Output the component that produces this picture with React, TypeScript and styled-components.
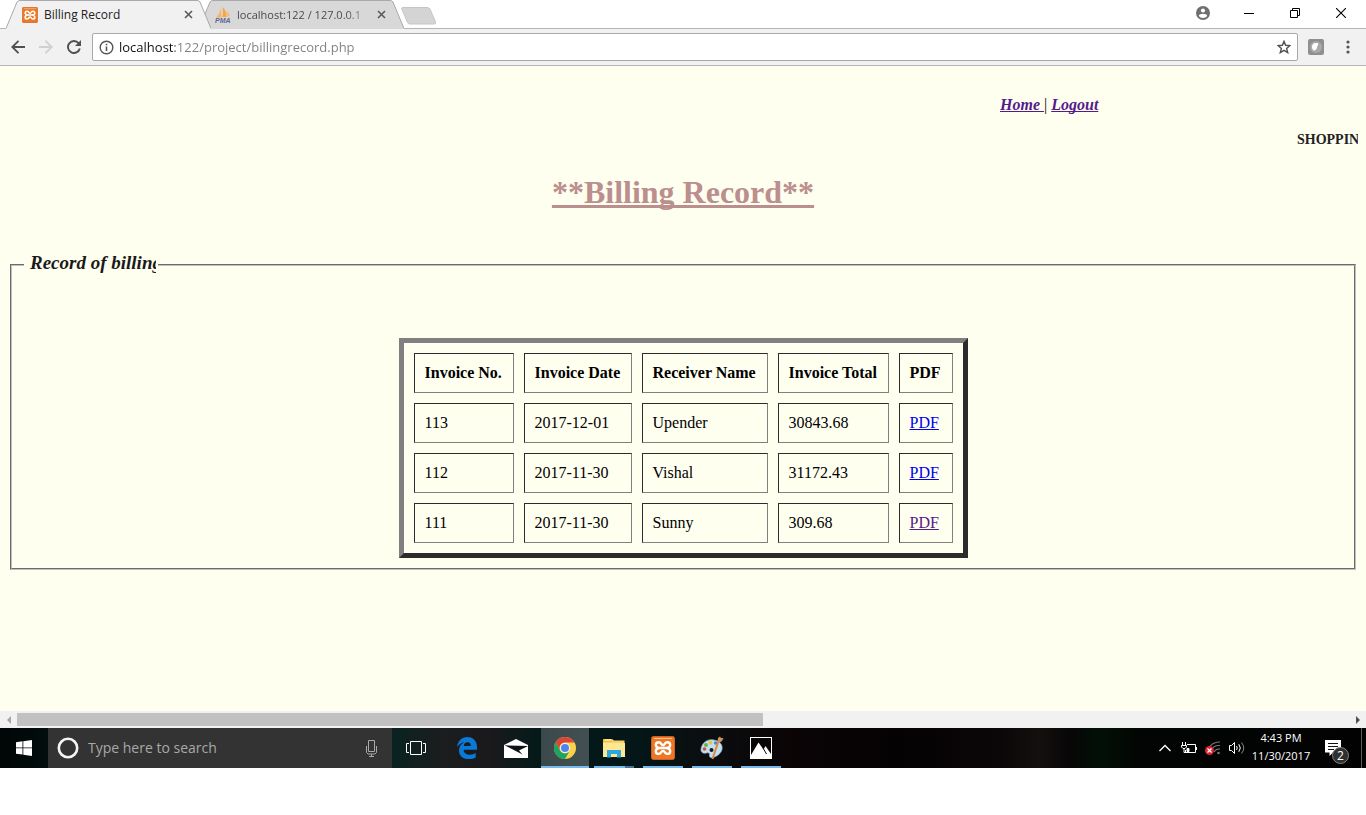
import React from "react";
import styled, { createGlobalStyle } from "styled-components";

const UI_FONT = '"Open Sans", "Noto Sans", sans-serif';
const PAGE_FONT = '"Liberation Serif", "Times New Roman", serif';

const GlobalStyle = createGlobalStyle`
  *, *::before, *::after { box-sizing: border-box; }
  body { margin: 0; background: #ffffff; font-family: ${UI_FONT}; }
  button { border: 0; padding: 0; background: none; font: inherit; color: inherit; }
  svg { display: block; flex: none; }
`;

/* ---------- Browser window ---------- */

const TabStrip = styled.header`
  display: flex;
  height: 29px;
  padding-left: 6px;
  background: #ffffff;
  border-bottom: 1px solid #b6b4b6;
`;

const Tabs = styled.div`
  display: flex;
  flex: 1;
`;

const Tab = styled.div<{ $active?: boolean }>`
  position: relative;
  z-index: ${(p) => (p.$active ? 2 : 1)};
  display: flex;
  align-items: center;
  width: 205px;
  height: 29px;
  padding: 0 16px;
  & + & { margin-left: -12px; }
`;

const TabShape = styled.svg`
  position: absolute;
  inset: 0;
`;

const TabLabel = styled.button<{ $fade?: boolean }>`
  position: relative;
  display: flex;
  align-items: center;
  flex: 1;
  gap: 6px;
  min-width: 0;
  font-size: ${(p) => (p.$fade ? "11px" : "12px")};
  line-height: 16px;
  color: ${(p) => (p.$fade ? "#4a4a4a" : "#222222")};
  white-space: nowrap;
  span {
    flex: 1;
    text-align: left;
    mask-image: ${(p) => (p.$fade ? "linear-gradient(90deg, #000 84%, rgba(0, 0, 0, 0.3))" : "none")};
  }
`;

const TabClose = styled.button`
  position: relative;
  display: grid;
  place-items: center;
  width: 14px;
  height: 16px;
  margin-left: 8px;
`;

const NewTab = styled.button`
  width: 36px;
  height: 20px;
  margin: 6px 0 0 -3px;
`;

const WindowControls = styled.div`
  display: flex;
  padding-right: 2px;
`;

const WindowButton = styled.button`
  display: grid;
  place-items: center;
  width: 46px;
  height: 26px;
`;

const Toolbar = styled.div`
  display: flex;
  align-items: center;
  height: 37px;
  padding: 0 4px;
  background: #f2f1f2;
  border-bottom: 1px solid #b6b4b6;
`;

const ToolButton = styled.button<{ $width?: number }>`
  display: grid;
  place-items: center;
  width: ${(p) => p.$width ?? 28}px;
  height: 28px;
`;

const AddressBar = styled.div`
  display: flex;
  align-items: center;
  flex: 1;
  height: 28px;
  margin-left: 4px;
  padding-left: 6px;
  background: #ffffff;
  border: 1px solid #a9a8a9;
  border-radius: 2px;
`;

const AddressInput = styled.input`
  flex: 1;
  min-width: 0;
  height: 22px;
  margin-left: 5px;
  padding: 0;
  border: 0;
  outline: 0;
  font-family: ${UI_FONT};
  font-size: 13px;
  color: transparent;
  background: linear-gradient(90deg, #111111 56px, #808080 56px);
  background-clip: text;
`;

/* ---------- Web page ---------- */

const Page = styled.main`
  padding: 30px 8px 141px;
  background: #fffff0;
  font-family: ${PAGE_FONT};
  font-size: 16px;
  line-height: 18px;
  color: #000000;
  overflow: hidden;
`;

const PageNav = styled.nav`
  margin-left: 992px;
  font-weight: bold;
  font-style: italic;
  white-space: pre;
  text-decoration-skip-ink: none;
  a { color: #551a8b; }
  span { font-weight: normal; font-style: normal; }
`;

const Ticker = styled.div`
  display: flex;
  justify-content: flex-end;
  margin-top: 17px;
  font-size: 14px;
  font-weight: bold;
  color: #222222;
  span {
    width: 61px;
    overflow: hidden;
    white-space: nowrap;
  }
`;

const Title = styled.h1`
  margin: 25px 0 0;
  font-size: 32px;
  line-height: 36px;
  text-align: center;
  text-decoration: underline;
  text-decoration-skip-ink: none;
  color: #bc8f8f;
`;

const Records = styled.fieldset`
  margin: 42px 2px 0;
  padding: 0 12px 10px;
  border: 2px groove #c0c0c0;
`;

const RecordsLegend = styled.legend`
  padding: 0 2px 4px;
  font-size: 19px;
  line-height: 22px;
  font-weight: bold;
  font-style: italic;
  color: #1a1a1a;
  span {
    display: block;
    width: 130px;
    padding-left: 4px;
    overflow: hidden;
    white-space: nowrap;
  }
`;

const InvoiceTable = styled.table`
  margin: 60px auto 0;
  border: 5px solid;
  border-color: #808080 #2c2c2c #2c2c2c #808080;
  border-collapse: separate;
  border-spacing: 10px;
  th, td {
    padding: 10px;
    border: 1px solid;
    border-color: #2c2c2c #808080 #808080 #2c2c2c;
    text-align: left;
    white-space: nowrap;
  }
`;

const Column = styled.col<{ $width: number }>`
  width: ${(p) => p.$width}px;
`;

const PdfLink = styled.a<{ $visited?: boolean }>`
  color: ${(p) => (p.$visited ? "#551a8b" : "#0000ee")};
`;

const ScrollBar = styled.div`
  display: flex;
  align-items: center;
  height: 17px;
  background: #f1f1f1;
`;

const ScrollArrow = styled.button`
  display: grid;
  place-items: center;
  width: 17px;
  height: 17px;
`;

const ScrollTrack = styled.div`
  flex: 1;
`;

const ScrollThumb = styled.div`
  width: 56%;
  height: 13px;
  background: #c1c1c1;
`;

/* ---------- Taskbar ---------- */

const Taskbar = styled.footer`
  display: flex;
  height: 40px;
  color: #ffffff;
  background: linear-gradient(90deg, #010606 0, #020d0d 48px, #082320 392px, #1b1d1e 440px,
    #1a191b 490px, #061a1a 535px, #041617 640px, #0b0e10 700px, #0a0405 790px, #050204 900px,
    #0b0708 1000px, #14100f 1040px, #070606 1070px, #021007 1100px, #020503 1140px, #020202 100%);
`;

const StartButton = styled.button`
  display: grid;
  place-items: center;
  width: 48px;
`;

const SearchBox = styled.label`
  display: flex;
  align-items: center;
  width: 344px;
  padding: 0 14px 0 9px;
  background: #333333;
`;

const SearchInput = styled.input`
  flex: 1;
  min-width: 0;
  margin: 0 0 0 9px;
  padding: 0;
  border: 0;
  outline: 0;
  background: none;
  font-family: ${UI_FONT};
  font-size: 14px;
  line-height: 20px;
  color: #ffffff;
  &::placeholder { color: #a8a8a8; opacity: 1; }
`;

const Apps = styled.div`
  display: flex;
  gap: 1px;
  flex: 1;
`;

const AppButton = styled.button<{ $state?: "active" | "open" | "stacked"; $wide?: boolean }>`
  display: flex;
  flex-direction: column;
  align-items: ${(p) => (p.$wide ? "flex-start" : "center")};
  width: ${(p) => (p.$wide ? "50px" : "48px")};
  background: ${(p) => (p.$state === "active" ? "linear-gradient(90deg, #3b494b, #435052)" : "none")};
  &::after {
    content: "";
    width: ${(p) => (p.$state === "active" ? "48px" : "40px")};
    height: 2px;
    background: ${(p) =>
      !p.$state
        ? "none"
        : p.$state === "stacked"
          ? "linear-gradient(90deg, #76b9ed 31px, #44739a 31px)"
          : "#76b9ed"};
  }
`;

const AppIcon = styled.span`
  display: grid;
  place-items: center;
  width: 48px;
  height: 38px;
  padding-top: 2px;
`;

const Tray = styled.div`
  display: flex;
  align-items: center;
`;

const TrayButton = styled.button`
  display: grid;
  place-items: center;
  width: 24px;
  height: 40px;
`;

const Clock = styled.button`
  width: 64px;
  height: 40px;
  padding-bottom: 2px;
  font-size: 11px;
  line-height: 18px;
  text-align: center;
  time { display: block; }
`;

const ActionCenter = styled.button`
  position: relative;
  display: grid;
  place-items: center;
  width: 40px;
  height: 40px;
`;

const Badge = styled.span`
  position: absolute;
  left: 19px;
  top: 19px;
  width: 17px;
  height: 17px;
  border: 1px solid #858585;
  border-radius: 50%;
  background: #303030;
  font-size: 12px;
  line-height: 15px;
  text-align: center;
`;

const ShowDesktop = styled.button`
  width: 5px;
  height: 40px;
  margin-left: 8px;
  border-left: 1px solid #5c5c5c;
`;

/* ---------- Icons ---------- */

const XamppIcon = ({ size }: { size: number }) => (
  <svg width={size} height={size} viewBox="0 0 24 24">
    <rect x="0.5" y="0.5" width="23" height="23" rx="2" fill="#ef7622" stroke="#c9622a" />
    <path d="M3 2.500h18" stroke="#ffc08a" strokeWidth="1" />
    <path
      d="M9.500 12H14.500M9.500 12C6 12 4.800 10.500 4.800 9C4.800 7.300 6 6.300 7.800 6.300C10.500 6.300 10 9.300 12 9.300S13.500 6.300 16.200 6.300C18 6.300 19.200 7.300 19.200 9C19.200 10.500 18 12 14.500 12C18 12 19.200 13.500 19.200 15.200C19.200 16.900 18 17.900 16.200 17.900C13.500 17.900 14 14.900 12 14.900S10.500 17.900 7.800 17.900C6 17.900 4.800 16.900 4.800 15.200C4.800 13.500 6 12 9.500 12z"
      fill="none"
      stroke="#ffffff"
      strokeWidth="2.400"
      strokeLinejoin="round"
    />
  </svg>
);

const PmaIcon = () => (
  <svg width="16" height="16" viewBox="0 0 16 16">
    <path d="M1 10.500C3.500 8 5 5 6 1.500l.5 9z" fill="#f5b56a" />
    <path d="M7.500 10C8 6.500 8 3 7.500 0c3 2.500 4 6 4.200 10z" fill="#f9a445" />
    <path d="M12 9.500c.2-2 0-4-.8-6 2.500 1.500 3.500 4 4 6z" fill="#f5bd80" />
    <text x="0" y="16" fontFamily="Liberation Sans" fontSize="7" fontWeight="bold" fontStyle="italic" fill="#5f6694">
      PMA
    </text>
  </svg>
);

const CloseIcon = () => (
  <svg width="9" height="9" viewBox="0 0 9 9">
    <path d="M1 1l7 7M8 1l-7 7" stroke="#5a5a5a" strokeWidth="1.600" />
  </svg>
);

const ChromeIcon = () => (
  <svg width="22" height="22" viewBox="0 0 22 22">
    <circle cx="11" cy="11" r="11" fill="#fbd04b" />
    <path d="M1.470 5.500A11 11 0 0 1 20.530 5.500H11A5.500 5.500 0 0 0 6.240 13.750z" fill="#dc4437" />
    <path d="M1.470 5.500A11 11 0 0 0 11 22l4.760-8.250A5.500 5.500 0 0 1 6.240 13.750z" fill="#1ea362" />
    <circle cx="11" cy="11" r="5" fill="#f4f6fa" />
    <circle cx="11" cy="11" r="4" fill="#4a86ee" />
  </svg>
);

const EdgeIcon = () => (
  <svg width="20" height="22" viewBox="0 0 20 22">
    <path
      d="M0 10C.8 4 4.700 0 10.300 0C16.500 0 20 4.500 20 10v2.700H6.600c.2 3.200 2.800 5 6.100 5c2.300 0 4.300-.6 6-1.600v4.400c-2 1-4.300 1.500-7 1.500C5.500 22 2 18.300 2 13.400c0-3.600 2-6.600 5.300-8.200C4.400 5.500 1.800 7.200 0 10zM6.800 9h7.100c0-2.300-1.100-3.700-3.400-3.700S7 6.800 6.800 9z"
      fill="#0a7ad8"
    />
  </svg>
);

const MailIcon = () => (
  <svg width="24" height="19" viewBox="0 0 24 19">
    <path d="M0 6L12 0l12 6v13H0z" fill="#ffffff" />
    <path d="M0.500 6.300L24 7l-9 4.500 3.500 4z" fill="#0c1415" />
  </svg>
);

const ExplorerIcon = () => (
  <svg width="22" height="19" viewBox="0 0 22 19">
    <path d="M0 1h2V0h7l2 1.500h10.500V18H0z" fill="#f5d468" />
    <path d="M0 0h9v3H0z" fill="#f7c02f" />
    <path d="M2 1h6" stroke="#ffffff" />
    <path d="M0 4h22v14H0z" fill="#fde793" />
    <path d="M4 18.500V11h14v7.500h-4V15H8v3.500z" fill="#2ba6e0" />
  </svg>
);

const PaintIcon = () => (
  <svg width="24" height="24" viewBox="0 0 24 24">
    <path d="M1 13C2 6 8 2.500 14 4c6 1 9 5 8 9.500c-1 4-5 7-9 8c-3 .7-4-.8-3.500-2.500c.5-2-1-2.500-3-2C3.500 18 .5 16.500 1 13z" fill="#c5dff0" stroke="#83aac5" strokeWidth=".7" />
    <circle cx="4.500" cy="13" r="1.800" fill="#d94b38" />
    <circle cx="6" cy="9" r="2" fill="#65b645" />
    <circle cx="10.500" cy="6.700" r="1.900" fill="#ecc53b" />
    <circle cx="15.500" cy="7" r="1.700" fill="#4d87cc" />
    <circle cx="11.500" cy="14" r="2" fill="#0b1b22" />
    <path d="M12.500 23l6-18" stroke="#dd883c" strokeWidth="2" />
    <path d="M17.500 5.500L18 2l2-1.500L21 2l2.500 0-1.500 3-3 2z" fill="#c6955f" />
  </svg>
);

const PhotosIcon = () => (
  <svg width="22" height="22" viewBox="0 0 22 22">
    <rect x=".5" y=".5" width="21" height="21" fill="#090607" stroke="#ffffff" />
    <path d="M1 18l7.500-12.500 5 7L15.500 9 21 17v4.500H1z" fill="#ffffff" />
    <path d="M13 11l3.500 6" stroke="#090607" />
  </svg>
);

const columnWidths = [100, 108, 126, 111, 54];

const invoices = [
  { no: "113", date: "2017-12-01", receiver: "Upender", total: "30843.68", opened: false },
  { no: "112", date: "2017-11-30", receiver: "Vishal", total: "31172.43", opened: false },
  { no: "111", date: "2017-11-30", receiver: "Sunny", total: "309.68", opened: true },
];

const TabOutline = ({ fill }: { fill: string }) => (
  <TabShape width="205" height="29" viewBox="0 0 205 29">
    <path d="M0 29V28.500L11 2Q12 .5 14 .5H191Q193 .5 194 2L205 28.500V29z" fill={fill} />
    <path d="M0 28.500L11 2Q12 .5 14 .5H191Q193 .5 194 2L205 28.500" fill="none" stroke="#aaa8aa" />
  </TabShape>
);

const BrowserChrome = () => (
  <>
    <TabStrip>
      <Tabs>
        <Tab $active>
          <TabOutline fill="#f2f1f2" />
          <TabLabel>
            <XamppIcon size={16} />
            <span>Billing Record</span>
          </TabLabel>
          <TabClose aria-label="Close tab"><CloseIcon /></TabClose>
        </Tab>
        <Tab>
          <TabOutline fill="#d9d8d9" />
          <TabLabel $fade>
            <PmaIcon />
            <span>localhost:122 / 127.0.0.1</span>
          </TabLabel>
          <TabClose aria-label="Close tab"><CloseIcon /></TabClose>
        </Tab>
        <NewTab aria-label="New tab">
          <svg width="36" height="20" viewBox="0 0 36 20">
            <path d="M1.500 1.500H26Q28 1.500 29 3L34.500 16Q35 18 33.500 18H9Q7 18 6.500 16.500L.8 3Q.5 1.500 1.500 1.500z" fill="#d5d4d5" stroke="#c6c5c6" />
          </svg>
        </NewTab>
      </Tabs>
      <WindowControls>
        <WindowButton aria-label="Profile">
          <svg width="14" height="14" viewBox="0 0 14 14">
            <circle cx="7" cy="7" r="7" fill="#6f6f6f" />
            <circle cx="7" cy="4.500" r="2.100" fill="#ffffff" />
            <path d="M2.800 10c0-3 8.400-3 8.400 0c-2 2.600-6.400 2.600-8.400 0z" fill="#ffffff" />
          </svg>
        </WindowButton>
        <WindowButton aria-label="Minimize">
          <svg width="10" height="10" viewBox="0 0 10 10"><path d="M0 5.500h10" stroke="#000" /></svg>
        </WindowButton>
        <WindowButton aria-label="Restore">
          <svg width="10" height="10" viewBox="0 0 10 10">
            <path d="M.5 2.500h7v7h-7zM2.500 2.500v-2h7v7h-2" fill="none" stroke="#000" />
          </svg>
        </WindowButton>
        <WindowButton aria-label="Close">
          <svg width="10" height="10" viewBox="0 0 10 10"><path d="M0 0l10 10M10 0L0 10" stroke="#000" strokeWidth="1.100" /></svg>
        </WindowButton>
      </WindowControls>
    </TabStrip>
    <Toolbar>
      <ToolButton aria-label="Back">
        <svg width="14" height="14" viewBox="0 0 14 14"><path d="M14 7H1.500M7.500 .8L1.300 7l6.200 6.200" fill="none" stroke="#505050" strokeWidth="1.900" /></svg>
      </ToolButton>
      <ToolButton aria-label="Forward">
        <svg width="14" height="14" viewBox="0 0 14 14"><path d="M0 7h12.500M6.500 .8L12.700 7l-6.200 6.200" fill="none" stroke="#d0d0d0" strokeWidth="1.900" /></svg>
      </ToolButton>
      <ToolButton aria-label="Reload">
        <svg width="14" height="14" viewBox="0 0 14 14">
          <path d="M11.600 3.200A6 6 0 1 0 12.800 8.500" fill="none" stroke="#505050" strokeWidth="1.900" />
          <path d="M14 0v6H8z" fill="#505050" />
        </svg>
      </ToolButton>
      <AddressBar>
        <svg width="15" height="15" viewBox="0 0 15 15">
          <circle cx="7.500" cy="7.500" r="6.300" fill="none" stroke="#555" strokeWidth="1.400" />
          <path d="M7.500 6.500v4.500M7.500 3.700v1.600" stroke="#555" strokeWidth="1.600" />
        </svg>
        <AddressInput aria-label="Address" defaultValue="localhost:122/project/billingrecord.php" />
        <ToolButton $width={26} aria-label="Bookmark">
          <svg width="14" height="14" viewBox="0 0 14 14">
            <path d="M7 1.300l1.600 4 4.300.3-3.300 2.800 1.100 4.200L7 10.300l-3.700 2.300 1.100-4.200L1.100 5.600l4.300-.3z" fill="none" stroke="#505050" strokeWidth="1.400" />
          </svg>
        </ToolButton>
      </AddressBar>
      <ToolButton $width={36} aria-label="Extension">
        <svg width="16" height="16" viewBox="0 0 16 16">
          <rect width="16" height="16" rx="2" fill="#8f8f8f" />
          <circle cx="8" cy="8" r="6" fill="#a9a9a9" />
          <path d="M5 11C3 8 4 4.500 7 4c1.200-.2 2 .2 3 0c.8 2-1 3-1 4.500S6.500 12.500 5 11z" fill="#ffffff" />
        </svg>
      </ToolButton>
      <ToolButton aria-label="Menu">
        <svg width="4" height="14" viewBox="0 0 4 14" fill="#555">
          <circle cx="2" cy="2" r="1.600" /><circle cx="2" cy="7" r="1.600" /><circle cx="2" cy="12" r="1.600" />
        </svg>
      </ToolButton>
    </Toolbar>
  </>
);

const BillingPage = () => (
  <Page>
    <PageNav><a href="#home">Home </a><span>|</span> <a href="#logout">Logout</a></PageNav>
    <Ticker><span>SHOPPING</span></Ticker>
    <Title>**Billing Record**</Title>
    <Records>
      <RecordsLegend><span>Record of billing</span></RecordsLegend>
      <InvoiceTable>
        <colgroup>
          {columnWidths.map((width, i) => (
            <Column key={i} $width={width} />
          ))}
        </colgroup>
        <thead>
          <tr>
            <th>Invoice No.</th>
            <th>Invoice Date</th>
            <th>Receiver Name</th>
            <th>Invoice Total</th>
            <th>PDF</th>
          </tr>
        </thead>
        <tbody>
          {invoices.map((row) => (
            <tr key={row.no}>
              <td>{row.no}</td>
              <td>{row.date}</td>
              <td>{row.receiver}</td>
              <td>{row.total}</td>
              <td><PdfLink href={`#invoice-${row.no}`} $visited={row.opened}>PDF</PdfLink></td>
            </tr>
          ))}
        </tbody>
      </InvoiceTable>
    </Records>
  </Page>
);

const HorizontalScroll = () => (
  <ScrollBar>
    <ScrollArrow aria-label="Scroll left">
      <svg width="4" height="8" viewBox="0 0 4 8"><path d="M4 0v8L0 4z" fill="#a3a3a3" /></svg>
    </ScrollArrow>
    <ScrollTrack><ScrollThumb /></ScrollTrack>
    <ScrollArrow aria-label="Scroll right">
      <svg width="4" height="8" viewBox="0 0 4 8"><path d="M0 0v8l4-4z" fill="#505050" /></svg>
    </ScrollArrow>
  </ScrollBar>
);

const WindowsTaskbar = () => (
  <Taskbar>
    <StartButton aria-label="Start">
      <svg width="16" height="16" viewBox="0 0 16 16" fill="#ffffff">
        <path d="M0 2.200L6.500 1.300V7.500H0zM7.300 1.200L16 0v7.500H7.300zM0 8.300h6.500v6.300L0 13.700zM7.300 8.300H16V16l-8.700-1.200z" />
      </svg>
    </StartButton>
    <SearchBox>
      <svg width="22" height="22" viewBox="0 0 22 22"><circle cx="11" cy="11" r="9.200" fill="none" stroke="#f4f4f4" strokeWidth="2.600" /></svg>
      <SearchInput type="text" aria-label="Search" placeholder="Type here to search" />
      <svg width="13" height="17" viewBox="0 0 13 17" fill="none" stroke="#a8a8a8">
        <path d="M3.500 .5h6v11h-6zM1.500 6v6.500l1.500 1.500h7l1.500-1.500V6M6.500 14v2.500M4 16.500h5" />
      </svg>
    </SearchBox>
    <Apps>
      <AppButton $wide aria-label="Task view">
        <AppIcon>
          <svg width="20" height="14" viewBox="0 0 20 14" fill="none" stroke="#ffffff">
            <path d="M4.500 .5h11v13h-11zM3 2.500H.5v9H3M17 2.500h2.500v9H17" />
          </svg>
        </AppIcon>
      </AppButton>
      <AppButton aria-label="Edge"><AppIcon><EdgeIcon /></AppIcon></AppButton>
      <AppButton aria-label="Mail"><AppIcon><MailIcon /></AppIcon></AppButton>
      <AppButton $state="active" aria-label="Chrome"><AppIcon><ChromeIcon /></AppIcon></AppButton>
      <AppButton $state="stacked" aria-label="File Explorer"><AppIcon><ExplorerIcon /></AppIcon></AppButton>
      <AppButton $state="open" aria-label="XAMPP"><AppIcon><XamppIcon size={24} /></AppIcon></AppButton>
      <AppButton $state="open" aria-label="Paint"><AppIcon><PaintIcon /></AppIcon></AppButton>
      <AppButton $state="open" aria-label="Photos"><AppIcon><PhotosIcon /></AppIcon></AppButton>
    </Apps>
    <Tray>
      <TrayButton aria-label="Show hidden icons">
        <svg width="12" height="8" viewBox="0 0 12 8"><path d="M.5 7L6 1.500 11.500 7" fill="none" stroke="#ffffff" strokeWidth="1.300" /></svg>
      </TrayButton>
      <TrayButton aria-label="Battery">
        <svg width="16" height="13" viewBox="0 0 16 13" fill="none" stroke="#ffffff">
          <path d="M6 2.500h8.500v8h-10V8M15.500 5v3M1.500 0v3M4.500 0v3M.5 3.500h5v1.500L4 6.500H2L.5 5zM3 6.500v4h2" />
          <path d="M6 6.500h2v3H6z" fill="#ffffff" />
        </svg>
      </TrayButton>
      <TrayButton aria-label="Network">
        <svg width="16" height="14" viewBox="0 0 16 14">
          <path d="M3 8.500A12 12 0 0 1 15 1M6 9.500A9 9 0 0 1 15 4.500M9 11a6 6 0 0 1 6-3" fill="none" stroke="#777777" strokeWidth="1.100" />
          <circle cx="13.500" cy="12" r="1.300" fill="#777777" />
          <circle cx="4.500" cy="9.500" r="4.500" fill="#dc2430" />
          <path d="M2.500 7.500l4 4M6.500 7.500l-4 4" stroke="#ffffff" strokeWidth="1.200" />
        </svg>
      </TrayButton>
      <TrayButton aria-label="Volume">
        <svg width="16" height="14" viewBox="0 0 16 14" fill="none" stroke="#ffffff">
          <path d="M.5 4.500h2l3-3v11l-3-3h-2zM7.500 5q1.500 2 0 4M9.800 3.200q3 3.800 0 7.600" />
          <path d="M12.500 1.500q4.500 5.500 0 11" stroke="#8a8a8a" />
        </svg>
      </TrayButton>
      <Clock>
        <time>4:43 PM</time>
        <time>11/30/2017</time>
      </Clock>
      <ActionCenter aria-label="Notifications">
        <svg width="16" height="16" viewBox="0 0 16 16">
          <path d="M0 0h16v12.500H8L4.500 16v-3.500H0z" fill="#ffffff" />
          <path d="M3 3.500h10M3 6.500h10M3 9.500h6" stroke="#111111" />
        </svg>
        <Badge>2</Badge>
      </ActionCenter>
      <ShowDesktop aria-label="Show desktop" />
    </Tray>
  </Taskbar>
);

export default function App() {
  return (
    <>
      <GlobalStyle />
      <BrowserChrome />
      <BillingPage />
      <HorizontalScroll />
      <WindowsTaskbar />
    </>
  );
}
